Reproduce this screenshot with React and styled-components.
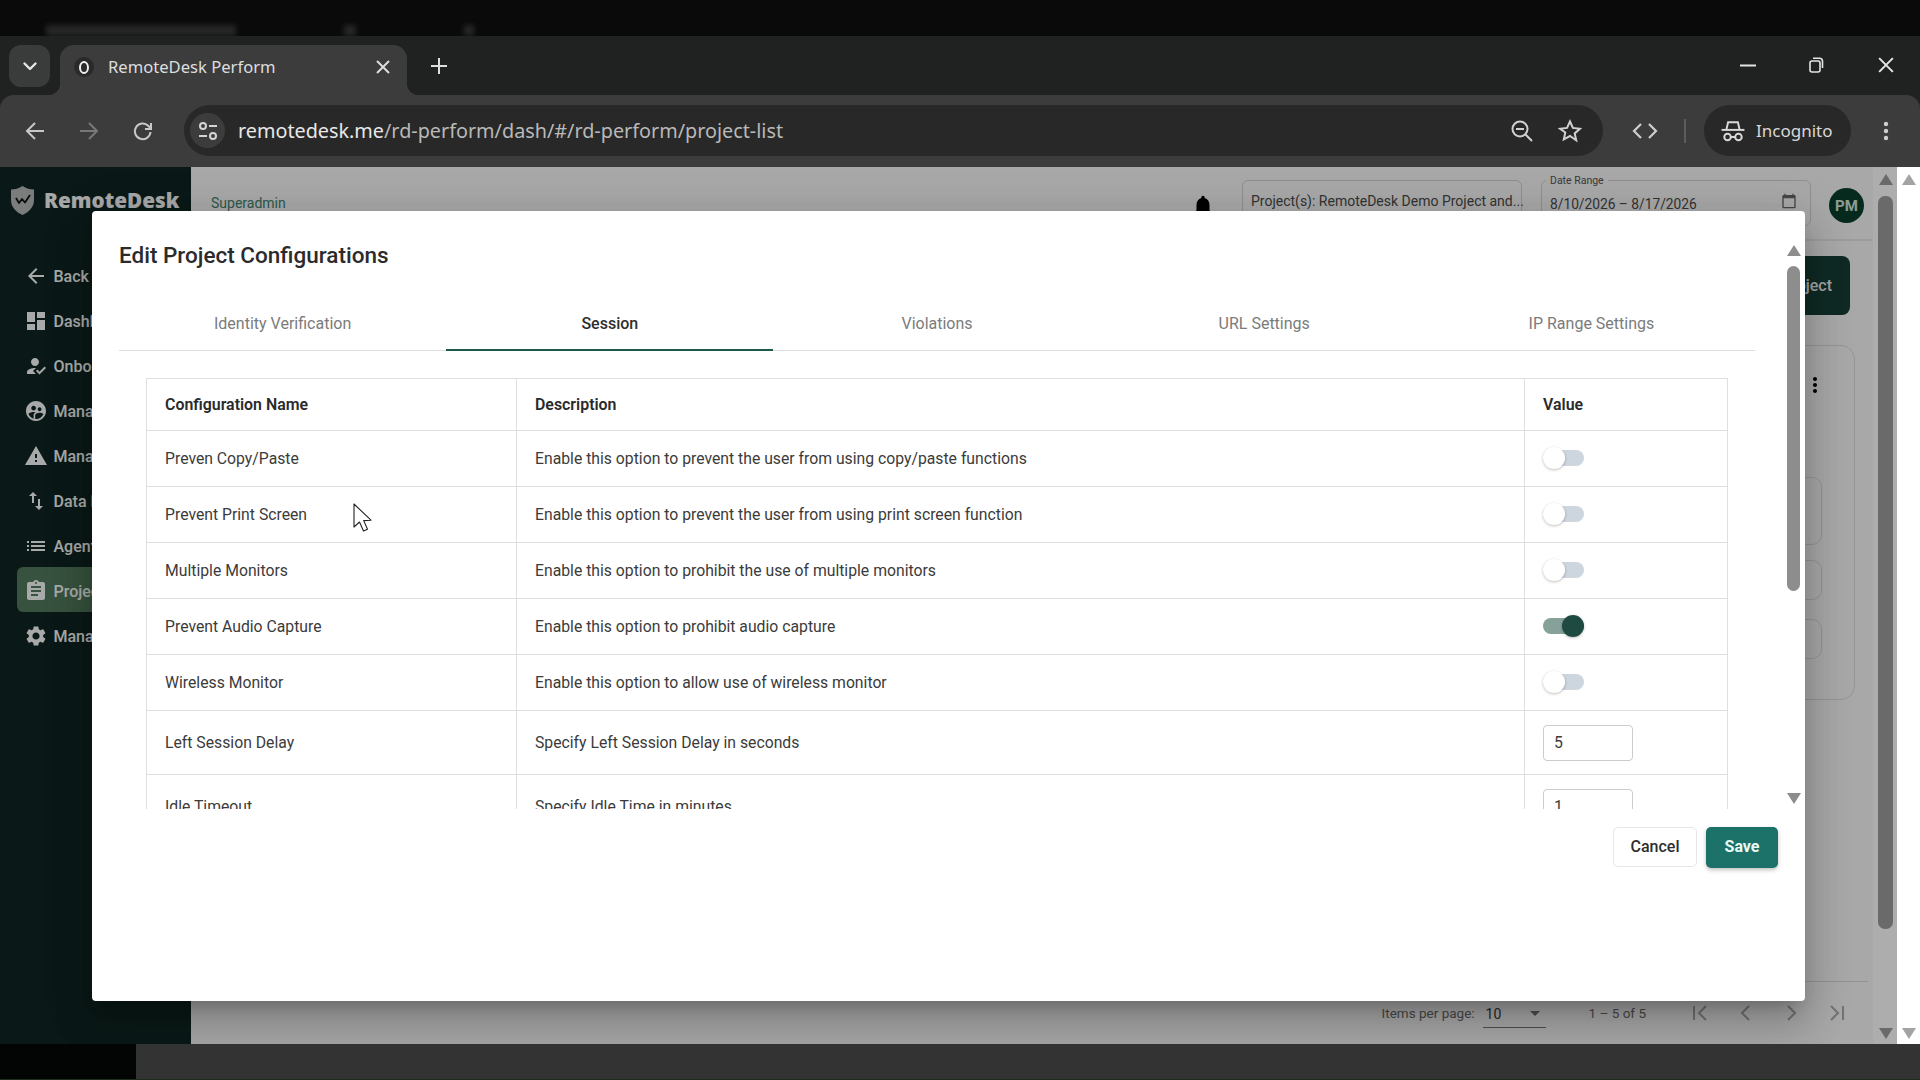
import React from "react";
import styled, { createGlobalStyle } from "styled-components";
import {
  MdArrowBack,
  MdDashboard,
  MdHowToReg,
  MdSupervisedUserCircle,
  MdWarning,
  MdSwapVert,
  MdList,
  MdAssignment,
  MdSettings,
  MdNotifications,
  MdCalendarToday,
  MdMoreVert,
} from "react-icons/md";

const GlobalStyle = createGlobalStyle`
  html, body {
    margin: 0;
    padding: 0;
    background: #0a0a0a;
    overflow: hidden;
  }
  * {
    box-sizing: border-box;
  }
`;

const Screen = styled.div`
  position: relative;
  width: 1920px;
  height: 1080px;
  display: flex;
  flex-direction: column;
  overflow: hidden;
  font-family: Roboto, "Liberation Sans", sans-serif;
`;

// Smeared ghost of the previous frame, the video had this at the very top
const GhostStrip = styled.div`
  height: 36px;
  flex: none;
  display: flex;
  align-items: flex-end;
  gap: 108px;
  background: #0a0a0a;
  padding: 0 0 0 46px;
  overflow: hidden;
`;

const GhostSmear = styled.div`
  width: ${(p) => p.$w}px;
  height: 11px;
  background: #262626;
  filter: blur(2.5px);
`;

const TabStrip = styled.div`
  height: 59px;
  flex: none;
  display: flex;
  align-items: flex-start;
  padding: 9px 0 0 9px;
  background: #202222;
`;

const TabListButton = styled.div`
  width: 41px;
  height: 42px;
  margin-right: 10px;
  border-radius: 12px;
  background: #3a3c3c;
  display: flex;
  align-items: center;
  justify-content: center;
  color: #e6e6e6;
`;

const ActiveTab = styled.div`
  position: relative;
  width: 347px;
  height: 50px;
  display: flex;
  align-items: center;
  padding: 0 17px 6px 14px;
  background: #3c3c3c;
  border-radius: 14px 14px 0 0;
  color: #dedede;

  &::before,
  &::after {
    content: "";
    position: absolute;
    bottom: 0;
    width: 12px;
    height: 12px;
  }
  &::before {
    left: -12px;
    background: radial-gradient(circle at 0 0, transparent 12px, #3c3c3c 12.5px);
  }
  &::after {
    right: -12px;
    background: radial-gradient(circle at 100% 0, transparent 12px, #3c3c3c 12.5px);
  }
`;

const Favicon = styled.div`
  width: 20px;
  height: 20px;
  border-radius: 50%;
  margin-right: 14px;
  background: #2a2a2a;
  display: flex;
  align-items: center;
  justify-content: center;

  &::after {
    content: "";
    width: 6px;
    height: 9px;
    border: 2px solid #f0f0f0;
    border-radius: 50%;
  }
`;

const TabTitle = styled.div`
  flex: 1;
  font-family: "Noto Sans", Roboto, sans-serif;
  font-size: 16.6px;
  line-height: 24px;
  white-space: nowrap;
`;

const PlusButton = styled.div`
  margin: 12px 0 0 23px;
  color: #dedede;
  display: flex;
`;

const WindowButtons = styled.div`
  margin-left: auto;
  display: flex;
  margin-top: 5px;
  color: #e4e4e4;
`;

const WindowButton = styled.div`
  width: 69px;
  height: 30px;
  display: flex;
  align-items: center;
  justify-content: center;
`;

const ToolbarWrap = styled.div`
  flex: none;
  background: #202222;
`;

const Toolbar = styled.div`
  height: 72px;
  display: flex;
  align-items: flex-start;
  padding: 10px 0 0 8px;
  background: #3c3c3c;
  border-radius: 14px 14px 0 0;
`;

const NavButton = styled.div`
  width: 54px;
  height: 51px;
  display: flex;
  align-items: center;
  justify-content: center;
  color: ${(p) => (p.$dim ? "#787878" : "#c8c8c8")};
`;

const Omnibox = styled.div`
  width: 1419px;
  height: 51px;
  margin-left: 14px;
  display: flex;
  align-items: center;
  padding: 0 9px 0 6px;
  background: #282828;
  border-radius: 26px;
`;

const SiteInfo = styled.div`
  width: 35px;
  height: 35px;
  border-radius: 50%;
  background: #3c3c3c;
  display: flex;
  align-items: center;
  justify-content: center;
  margin-right: 13px;
  color: #d4d4d4;
`;

const UrlText = styled.div`
  flex: 1;
  font-family: "Noto Sans", Roboto, sans-serif;
  font-size: 19.8px;
  line-height: 28px;
  color: #b9b9b9;
  white-space: nowrap;
`;

const UrlDomain = styled.span`
  color: #e8e8e8;
`;

const OmniboxIcon = styled.div`
  width: 48px;
  height: 40px;
  display: flex;
  align-items: center;
  justify-content: center;
  color: #d0d0d0;
`;

const ToolIcon = styled.div`
  width: 40px;
  height: 51px;
  margin-left: 22px;
  display: flex;
  align-items: center;
  justify-content: center;
  color: #cfcfcf;
`;

const ToolDivider = styled.div`
  width: 2px;
  height: 24px;
  margin: 14px 0 0 19px;
  background: #5c5c5c;
`;

const IncognitoPill = styled.div`
  width: 147px;
  height: 51px;
  margin-left: 18px;
  display: flex;
  align-items: center;
  gap: 11px;
  padding-left: 17px;
  border-radius: 26px;
  background: #282828;
  color: #d8d8d8;
  font-family: "Noto Sans", Roboto, sans-serif;
  font-size: 17px;
`;

const DotsButton = styled.div`
  width: 30px;
  height: 51px;
  margin-left: 20px;
  display: flex;
  align-items: center;
  justify-content: center;
  color: #cfcfcf;
`;

const Page = styled.div`
  height: 877px;
  flex: none;
  display: flex;
  background: #fff;
`;

const Shell = styled.div`
  position: relative;
  width: 1897px;
  display: flex;
  overflow: hidden;
`;

const Sidebar = styled.aside`
  width: 191px;
  flex: none;
  background: #102622;
  padding-top: 17px;
  overflow: hidden;
`;

const LogoRow = styled.div`
  height: 32px;
  display: flex;
  align-items: center;
  gap: 9px;
  padding-left: 10px;
  margin-bottom: 36px;
  color: #f6f8f7;
  font-family: "Open Sans", sans-serif;
  font-size: 20.7px;
  font-weight: 800;
  white-space: nowrap;
`;

const NavItem = styled.div`
  height: 45px;
  margin: 0 0 0 17px;
  padding: 3px 0 0 6.5px;
  display: flex;
  align-items: center;
  gap: 6px;
  font-size: 16px;
  font-weight: 500;
  color: #f8fbfa;
  white-space: nowrap;
  border-radius: 6px 0 0 6px;
  background: ${(p) => (p.$active ? "#517a5c" : "transparent")};
`;

const Main = styled.main`
  flex: 1;
  min-width: 0;
  display: flex;
  flex-direction: column;
  background: #f8f8f8;
`;

const TopBar = styled.div`
  height: 74px;
  flex: none;
  display: flex;
  align-items: flex-start;
  padding: 13px 9px 0 20px;
  border-bottom: 2px solid #e6e6e6;
`;

const Role = styled.div`
  margin-top: 13px;
  font-size: 14px;
  line-height: 20px;
  color: #44846f;
`;

const Bell = styled.div`
  margin: 13px 26px 0 auto;
  display: flex;
  color: #000;
`;

const FieldBox = styled.div`
  position: relative;
  width: ${(p) => p.$w}px;
  height: 46px;
  margin-right: ${(p) => p.$gap}px;
  padding: ${(p) => p.$top}px 8px 0;
  border: 1px solid #d3d3d3;
  border-radius: 6px;
  font-size: ${(p) => p.$size}px;
  line-height: 20px;
  color: #4c4c4c;
  white-space: nowrap;
`;

const FieldLabel = styled.span`
  position: absolute;
  top: -7px;
  left: 4px;
  padding: 0 4px;
  background: #f8f8f8;
  font-size: 10.5px;
  line-height: 13px;
  color: #555;
`;

const FieldIcon = styled.span`
  position: absolute;
  right: 13px;
  top: 12px;
  display: flex;
  color: #666;
`;

const Avatar = styled.div`
  width: 35px;
  height: 35px;
  margin-top: 8px;
  border-radius: 50%;
  background: #0b3f2f;
  color: #d2e8dc;
  display: flex;
  align-items: center;
  justify-content: center;
  font-size: 15px;
  font-weight: 700;
`;

const ActionRow = styled.div`
  display: flex;
  justify-content: flex-end;
  padding: 15px 23px 0 0;
`;

const AddButton = styled.div`
  width: 170px;
  height: 59px;
  display: flex;
  align-items: center;
  justify-content: flex-end;
  padding-right: 18px;
  border-radius: 8px;
  background: #173e35;
  color: #f2f2f2;
  font-size: 16px;
  font-weight: 500;
`;

const ProjectCard = styled.div`
  height: 355px;
  margin: 30px 18px 0 24px;
  padding: 27px 32px 0 24px;
  border: 1px solid #dcdcdc;
  border-radius: 14px;
`;

const CardHead = styled.div`
  height: 30px;
  display: flex;
  justify-content: flex-end;
  color: #000;
  margin-right: -5px;
`;

const GhostBox = styled.div`
  height: ${(p) => p.$h}px;
  margin-top: ${(p) => p.$mt}px;
  border: 1px solid #dcdcdc;
  border-radius: 10px;
`;

const PaginationBar = styled.div`
  margin-top: auto;
  height: 63px;
  flex: none;
  display: flex;
  align-items: center;
  justify-content: flex-end;
  padding: 0 10px 0 0;
  border-top: 1px solid #d8d8d8;
  margin-right: 5px;
  color: #6c6c6c;
  font-size: 13.5px;
`;

const PerPage = styled.div`
  width: 63px;
  height: 27px;
  margin: 0 43px 0 8px;
  padding: 0 3px;
  display: flex;
  align-items: center;
  justify-content: space-between;
  border-bottom: 1px solid #777;
  color: #3a3a3a;
  font-size: 14px;
  position: relative;
  top: 1px;
`;

const SelectCaret = styled.span`
  width: 0;
  height: 0;
  margin-right: 3px;
  border-left: 5px solid transparent;
  border-right: 5px solid transparent;
  border-top: 5px solid #707070;
`;

const RangeLabel = styled.div`
  margin-right: 32px;
`;

const PagerIcon = styled.div`
  width: 45px;
  display: flex;
  justify-content: center;
  color: #a8a8a8;
`;

const ScrollColumn = styled.div`
  width: ${(p) => p.$w}px;
  margin: ${(p) => p.$margin};
  flex: none;
  display: flex;
  flex-direction: column;
  align-items: center;
`;

const ScrollArrow = styled.div`
  flex: none;
  width: 0;
  height: 0;
  border-left: 7.5px solid transparent;
  border-right: 7.5px solid transparent;
  ${(p) =>
    p.$down
      ? `border-top: 11px solid ${p.$color};`
      : `border-bottom: 11px solid ${p.$color};`}
`;

const ScrollThumb = styled.div`
  flex: none;
  width: 100%;
  height: ${(p) => p.$h}px;
  margin: ${(p) => p.$margin};
  border-radius: 7px;
  background: ${(p) => p.$color};
`;

const Backdrop = styled.div`
  position: absolute;
  inset: 0;
  background: rgba(0, 0, 0, 0.32);
`;

const WhiteStrip = styled.div`
  flex: 1;
  display: flex;
  flex-direction: column;
  align-items: center;
  justify-content: space-between;
  padding: 7px 0 5px;
`;

const Modal = styled.div`
  position: absolute;
  top: 44px;
  left: 92px;
  width: 1713px;
  height: 790px;
  background: #fff;
  border-radius: 4px;
  box-shadow: 0 11px 15px -7px rgba(0, 0, 0, 0.2),
    0 24px 38px 3px rgba(0, 0, 0, 0.14), 0 9px 46px 8px rgba(0, 0, 0, 0.12);
`;

const ModalBody = styled.div`
  height: 598px;
  display: flex;
`;

const ModalContent = styled.div`
  flex: 1;
  min-width: 0;
  padding: 27px 32px 0 27px;
  overflow: hidden;
`;

const ModalTitle = styled.h2`
  margin: 0 0 28px;
  font-size: 22.5px;
  line-height: 34px;
  font-weight: 500;
  color: #2b2b2b;
`;

const Tabs = styled.div`
  display: flex;
  border-bottom: 1px solid #dedede;
`;

const TabItem = styled.div`
  position: relative;
  flex: 1;
  height: 50px;
  display: flex;
  align-items: center;
  justify-content: center;
  padding-bottom: 4px;
  font-size: 16px;
  font-weight: ${(p) => (p.$active ? 500 : 400)};
  color: ${(p) => (p.$active ? "#2e2e2e" : "#7b7b7b")};

  &::after {
    content: "";
    position: absolute;
    left: 0;
    right: 0;
    bottom: -1px;
    height: 2px;
    background: ${(p) => (p.$active ? "#1d5a4e" : "transparent")};
  }
`;

const TableWrap = styled.div`
  margin: 27px 0 0 27px;
  width: 1581px;
`;

const ConfigTable = styled.table`
  width: 100%;
  table-layout: fixed;
  border-collapse: collapse;
`;

const HeadCell = styled.th`
  height: 52px;
  padding: 0 18px;
  border: 1px solid #dfdfdf;
  text-align: left;
  font-size: 15.9px;
  font-weight: 600;
  color: #2a2a2a;
`;

const Cell = styled.td`
  height: ${(p) => (p.$tall ? 64 : 56)}px;
  padding: 0 18px;
  border: 1px solid #dfdfdf;
  font-size: 15.75px;
  color: #3b3b3b;
`;

const ToggleTrack = styled.div`
  position: relative;
  width: 41px;
  height: 16px;
  margin-top: -2px;
  border-radius: 8px;
  background: ${(p) => (p.$on ? "#86a09a" : "#cdd5df")};
`;

const ToggleKnob = styled.div`
  position: absolute;
  top: -3px;
  left: ${(p) => (p.$on ? 19 : 0)}px;
  width: 22px;
  height: 22px;
  border-radius: 50%;
  background: ${(p) => (p.$on ? "#1f4a42" : "#fff")};
  box-shadow: 0 1px 3px rgba(0, 0, 0, 0.25);
`;

const ValueInput = styled.input`
  display: block;
  width: 90px;
  height: 36px;
  padding: 0 10px;
  border: 1px solid #cccccc;
  border-radius: 4px;
  background: #fff;
  font-family: Roboto, sans-serif;
  font-size: 15.75px;
  color: #3b3b3b;
  outline: none;
`;

const ModalFooter = styled.div`
  display: flex;
  justify-content: flex-end;
  gap: 9px;
  padding: 18px 27px 0 0;
`;

const CancelButton = styled.button`
  width: 84px;
  height: 40px;
  padding: 0 0 2px;
  border: 1px solid #e6e6e6;
  border-radius: 5px;
  background: #fff;
  font-family: Roboto, sans-serif;
  font-size: 16px;
  font-weight: 500;
  color: #2e2e2e;
`;

const SaveButton = styled.button`
  width: 72px;
  height: 41px;
  padding: 0 0 2px;
  border: none;
  border-radius: 5px;
  background: #1c7269;
  box-shadow: 0 2px 4px rgba(0, 0, 0, 0.25);
  font-family: Roboto, sans-serif;
  font-size: 16px;
  font-weight: 700;
  color: #eafaf6;
`;

const Cursor = styled.svg`
  position: absolute;
  left: 353px;
  top: 503px;
`;

const BottomStrip = styled.div`
  flex: 1;
  display: flex;
  border-bottom: 1px solid #1c2f1c;
`;

const BottomBlack = styled.div`
  width: 136px;
  background: #030504;
`;

const BottomBar = styled.div`
  flex: 1;
  background: #333333;
  padding-left: 1275px;
  overflow: hidden;
`;

const ShieldLogo = () => (
  <svg width="25" height="29" viewBox="0 0 25 29">
    <path d="M12.5 0 C9 2.5 5 3.5 1 3.5 L1 14 C1 21 6 26 12.5 29 C19 26 24 21 24 14 L24 3.5 C20 3.5 16 2.5 12.5 0Z" fill="#b4b8b6" />
    <path d="M6 12 L9 17 L12 13 L15 16.5 L20 9" fill="none" stroke="#111" strokeWidth="1.8" strokeLinejoin="round" />
  </svg>
);

const ChevronDown = () => (
  <svg width="18" height="18" viewBox="0 0 18 18" fill="none" stroke="currentColor" strokeWidth="2.4" strokeLinecap="round" strokeLinejoin="round">
    <path d="M3.5 6.5 9 12l5.5-5.5" />
  </svg>
);

const CloseGlyph = ({ size = 14, width = 2 }) => (
  <svg width={size} height={size} viewBox="0 0 14 14" fill="none" stroke="currentColor" strokeWidth={width}>
    <path d="M1 1l12 12M13 1 1 13" />
  </svg>
);

const PlusGlyph = () => (
  <svg width="18" height="18" viewBox="0 0 18 18" fill="none" stroke="currentColor" strokeWidth="2">
    <path d="M9 1v16M1 9h16" />
  </svg>
);

const MinimizeGlyph = () => (
  <svg width="16" height="3" viewBox="0 0 16 3">
    <path d="M0 1.5h16" stroke="currentColor" strokeWidth="2" />
  </svg>
);

const RestoreGlyph = () => (
  <svg width="15" height="16" viewBox="0 0 15 16" fill="none" stroke="currentColor" strokeWidth="1.6">
    <rect x="1" y="4" width="10" height="11" rx="2" />
    <path d="M4 1.2h6.5A3 3 0 0 1 13.5 4v7" />
  </svg>
);

const BackArrow = ({ flip }) => (
  <svg width="22" height="22" viewBox="0 0 22 22" fill="none" stroke="currentColor" strokeWidth="2" style={flip ? { transform: "scaleX(-1)" } : undefined}>
    <path d="M20 11H3M11 3l-8 8 8 8" />
  </svg>
);

const ReloadGlyph = () => (
  <svg width="22" height="22" viewBox="0 0 22 22" fill="none" stroke="currentColor" strokeWidth="2">
    <path d="M18.5 12a7.8 7.8 0 1 1-2.3-6.2L19 8.6" />
    <path d="M19 3v6h-6" />
  </svg>
);

const TuneGlyph = () => (
  <svg width="22" height="22" viewBox="0 0 22 22" fill="none" stroke="currentColor" strokeWidth="2">
    <circle cx="6" cy="6" r="3" />
    <path d="M12 6h8M2 16h8" />
    <circle cx="16" cy="16" r="3" />
  </svg>
);

const ZoomOutGlyph = () => (
  <svg width="24" height="24" viewBox="0 0 24 24" fill="none" stroke="currentColor" strokeWidth="2">
    <circle cx="10" cy="10" r="7.5" />
    <path d="M6 10h8M15.5 15.5 22 22" />
  </svg>
);

const StarGlyph = () => (
  <svg width="24" height="24" viewBox="0 0 24 24" fill="none" stroke="currentColor" strokeWidth="2" strokeLinejoin="miter">
    <path d="M12 2.5l2.9 6.4 7 .8-5.2 4.7 1.5 6.9L12 17l-6.2 3.3 1.5-6.9L2 9.7l7-.8z" />
  </svg>
);

const CodeGlyph = () => (
  <svg width="26" height="20" viewBox="0 0 26 20" fill="none" stroke="currentColor" strokeWidth="2.2">
    <path d="M9 3 2 10l7 7M17 3l7 7-7 7" />
  </svg>
);

const IncognitoGlyph = () => (
  <svg width="24" height="24" viewBox="0 0 22 22" fill="none" stroke="currentColor" strokeWidth="1.8">
    <path d="M5 9.5 6.5 3h9L17 9.5" />
    <path d="M0.5 10h21" />
    <circle cx="6" cy="16.5" r="3" />
    <circle cx="16" cy="16.5" r="3" />
    <path d="M9 16.5h4" />
  </svg>
);

const DotsGlyph = () => (
  <svg width="6" height="20" viewBox="0 0 6 20" fill="currentColor">
    <circle cx="3" cy="3" r="2.2" />
    <circle cx="3" cy="10" r="2.2" />
    <circle cx="3" cy="17" r="2.2" />
  </svg>
);

const PagerGlyph = ({ d }) => (
  <svg width="20" height="20" viewBox="0 0 20 20" fill="none" stroke="currentColor" strokeWidth="2">
    <path d={d} />
  </svg>
);

const navItems = [
  { icon: MdArrowBack, label: "Back to Home" },
  { icon: MdDashboard, label: "Dashboard" },
  { icon: MdHowToReg, label: "Onboarding" },
  { icon: MdSupervisedUserCircle, label: "Manage Users" },
  { icon: MdWarning, label: "Manage Violations" },
  { icon: MdSwapVert, label: "Data Export" },
  { icon: MdList, label: "Agent Logs" },
  { icon: MdAssignment, label: "Projects", active: true },
  { icon: MdSettings, label: "Manage Settings" },
];

const tabs = [
  "Identity Verification",
  "Session",
  "Violations",
  "URL Settings",
  "IP Range Settings",
];

const configs = [
  { name: "Preven Copy/Paste", desc: "Enable this option to prevent the user from using copy/paste functions", on: false },
  { name: "Prevent Print Screen", desc: "Enable this option to prevent the user from using print screen function", on: false },
  { name: "Multiple Monitors", desc: "Enable this option to prohibit the use of multiple monitors", on: false },
  { name: "Prevent Audio Capture", desc: "Enable this option to prohibit audio capture", on: true },
  { name: "Wireless Monitor", desc: "Enable this option to allow use of wireless monitor", on: false },
  { name: "Left Session Delay", desc: "Specify Left Session Delay in seconds", value: "5" },
  { name: "Idle Timeout", desc: "Specify Idle Time in minutes", value: "1" },
];

const pagerPaths = [
  "M3 3v14M15 3l-7 7 7 7",
  "M13 3l-7 7 7 7",
  "M7 3l7 7-7 7",
  "M17 3v14M5 3l7 7-7 7",
];

const ConfigRow = ({ config }) => {
  const hasInput = config.value !== undefined;
  return (
    <tr>
      <Cell $tall={hasInput}>{config.name}</Cell>
      <Cell $tall={hasInput}>{config.desc}</Cell>
      <Cell $tall={hasInput}>
        {hasInput ? (
          <ValueInput defaultValue={config.value} />
        ) : (
          <ToggleTrack $on={config.on}>
            <ToggleKnob $on={config.on} />
          </ToggleTrack>
        )}
      </Cell>
    </tr>
  );
};

const App = () => (
  <Screen>
    <GlobalStyle />
    <GhostStrip>
      <GhostSmear $w={190} />
      <GhostSmear $w={12} />
      <GhostSmear $w={10} />
    </GhostStrip>

    <TabStrip>
      <TabListButton>
        <ChevronDown />
      </TabListButton>
      <ActiveTab>
        <Favicon />
        <TabTitle>RemoteDesk Perform</TabTitle>
        <CloseGlyph />
      </ActiveTab>
      <PlusButton>
        <PlusGlyph />
      </PlusButton>
      <WindowButtons>
        <WindowButton>
          <MinimizeGlyph />
        </WindowButton>
        <WindowButton>
          <RestoreGlyph />
        </WindowButton>
        <WindowButton>
          <CloseGlyph size={16} width={1.8} />
        </WindowButton>
      </WindowButtons>
    </TabStrip>

    <ToolbarWrap>
      <Toolbar>
        <NavButton>
          <BackArrow />
        </NavButton>
        <NavButton $dim>
          <BackArrow flip />
        </NavButton>
        <NavButton>
          <ReloadGlyph />
        </NavButton>
        <Omnibox>
          <SiteInfo>
            <TuneGlyph />
          </SiteInfo>
          <UrlText>
            <UrlDomain>remotedesk.me</UrlDomain>/rd-perform/dash/#/rd-perform/project-list
          </UrlText>
          <OmniboxIcon>
            <ZoomOutGlyph />
          </OmniboxIcon>
          <OmniboxIcon>
            <StarGlyph />
          </OmniboxIcon>
        </Omnibox>
        <ToolIcon>
          <CodeGlyph />
        </ToolIcon>
        <ToolDivider />
        <IncognitoPill>
          <IncognitoGlyph />
          Incognito
        </IncognitoPill>
        <DotsButton>
          <DotsGlyph />
        </DotsButton>
      </Toolbar>
    </ToolbarWrap>

    <Page>
      <Shell>
        <Sidebar>
          <LogoRow>
            <ShieldLogo />
            RemoteDesk
          </LogoRow>
          {navItems.map((item) => (
            <NavItem key={item.label} $active={item.active}>
              <item.icon size={24} />
              {item.label}
            </NavItem>
          ))}
        </Sidebar>

        <Main>
          <TopBar>
            <Role>Superadmin</Role>
            <Bell>
              <MdNotifications size={26} />
            </Bell>
            <FieldBox $w={280} $gap={19} $top={10} $size={14}>
              Project(s): RemoteDesk Demo Project and...
            </FieldBox>
            <FieldBox $w={270} $gap={18} $top={13} $size={13.75}>
              <FieldLabel>Date Range</FieldLabel>
              8/10/2026 – 8/17/2026
              <FieldIcon>
                <MdCalendarToday size={16} />
              </FieldIcon>
            </FieldBox>
            <Avatar>PM</Avatar>
          </TopBar>
          <ActionRow>
            <AddButton>Add Project</AddButton>
          </ActionRow>
          <ProjectCard>
            <CardHead>
              <MdMoreVert size={24} />
            </CardHead>
            <GhostBox $h={68} $mt={74} />
            <GhostBox $h={40} $mt={15} />
            <GhostBox $h={40} $mt={19} />
          </ProjectCard>
          <PaginationBar>
            Items per page:
            <PerPage>
              10
              <SelectCaret />
            </PerPage>
            <RangeLabel>1 – 5 of 5</RangeLabel>
            {pagerPaths.map((d) => (
              <PagerIcon key={d}>
                <PagerGlyph d={d} />
              </PagerIcon>
            ))}
          </PaginationBar>
        </Main>

        <ScrollColumn $w={15} $margin="7px 4px 5px 5px">
          <ScrollArrow $color="#9c9c9c" />
          <ScrollThumb $h={733} $margin="11px 0 auto" $color="#9c9c9c" />
          <ScrollArrow $down $color="#9c9c9c" />
        </ScrollColumn>

        <Backdrop />

        <Modal>
          <ModalBody>
            <ModalContent>
              <ModalTitle>Edit Project Configurations</ModalTitle>
              <Tabs>
                {tabs.map((tab) => (
                  <TabItem key={tab} $active={tab === "Session"}>
                    {tab}
                  </TabItem>
                ))}
              </Tabs>
              <TableWrap>
                <ConfigTable>
                  <colgroup>
                    <col width="370" />
                    <col width="1008" />
                    <col width="203" />
                  </colgroup>
                  <thead>
                    <tr>
                      <HeadCell>Configuration Name</HeadCell>
                      <HeadCell>Description</HeadCell>
                      <HeadCell>Value</HeadCell>
                    </tr>
                  </thead>
                  <tbody>
                    {configs.map((config) => (
                      <ConfigRow key={config.name} config={config} />
                    ))}
                  </tbody>
                </ConfigTable>
              </TableWrap>
            </ModalContent>
            <ScrollColumn $w={13} $margin="34px 5px 5px 0">
              <ScrollArrow $color="#8d8d8d" />
              <ScrollThumb $h={325} $margin="10px 0 auto" $color="#8d8d8d" />
              <ScrollArrow $down $color="#8d8d8d" />
            </ScrollColumn>
          </ModalBody>
          <ModalFooter>
            <CancelButton>Cancel</CancelButton>
            <SaveButton>Save</SaveButton>
          </ModalFooter>
        </Modal>
      </Shell>
      <WhiteStrip>
        <ScrollArrow $color="#a3a3a3" />
        <ScrollArrow $down $color="#a3a3a3" />
      </WhiteStrip>
    </Page>

    <BottomStrip>
      <BottomBlack />
      <BottomBar />
    </BottomStrip>

    <Cursor width="24" height="30" viewBox="0 0 24 30">
      <path d="M1 1 L1 24 L6.5 19 L10.5 28 L14.5 26.3 L10.7 17.6 L18 17.2 Z" fill="#fff" stroke="#222" strokeWidth="1.1" strokeLinejoin="round" />
    </Cursor>
  </Screen>
);

export default App;
